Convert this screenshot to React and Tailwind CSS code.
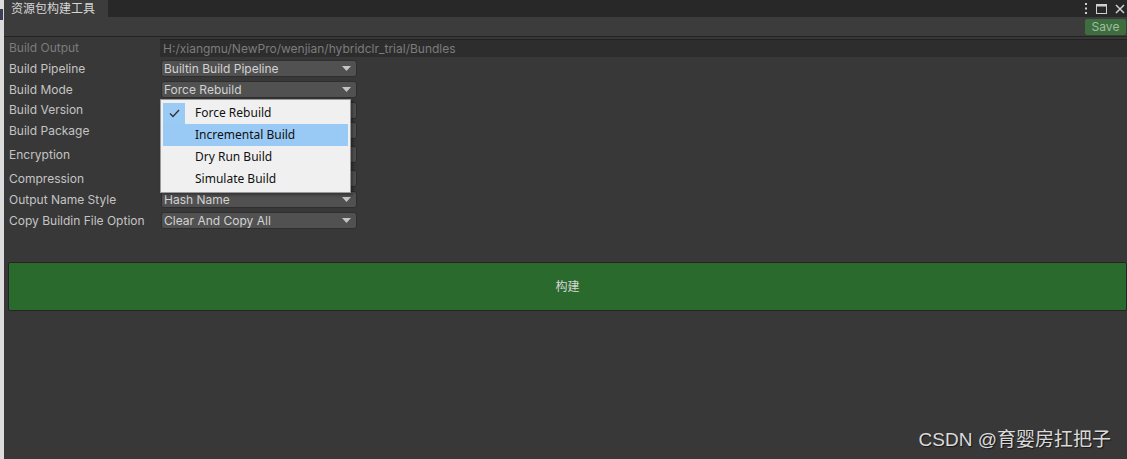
import React from "react";

const font = { fontFamily: "Inter, 'Noto Sans CJK SC', sans-serif" };

function Caret() {
  return (
    <svg width="9" height="5" viewBox="0 0 9 5" className="shrink-0">
      <path d="M0 0 L9 0 L4.5 5 Z" fill="#c4c4c4" />
    </svg>
  );
}

function Dropdown({ value }) {
  return (
    <div className="ml-[161px] w-[196px] h-[17px] bg-[#515151] border border-[#2e2e2e] rounded-[3px] flex items-center justify-between pl-[2px] pr-[5px] text-[12px] text-[#d2d2d2] leading-none">
      <span>{value}</span>
      <Caret />
    </div>
  );
}

function Row({ label, h, children, dim }) {
  return (
    <div className={`flex items-center ${h} relative`}>
      <div
        className={`absolute left-[9px] text-[12px] leading-none ${dim ? "text-[#7c7c7c]" : "text-[#c4c4c4]"}`}
      >
        {label}
      </div>
      {children}
    </div>
  );
}

export default function App() {
  return (
    <div className="w-[1127px] h-[459px] bg-[#383838] flex overflow-hidden relative" style={font}>
      <div className="w-[4px] h-full bg-[#dcdcdc] flex flex-col">
        <div className="h-[9px]" />
        <div className="h-[11px] w-[3px] bg-[#3a3f55]" />
      </div>
      <div className="flex-1 flex flex-col relative">
        {/* tab bar */}
        <div className="h-[17px] bg-[#282828] flex items-stretch">
          <div className="w-[104px] bg-[#3c3c3c] border-t border-[#3c3c3c] flex items-center pl-[7px] text-[12px] text-[#d6d6d6] leading-none">
            资源包构建工具
          </div>
          <div className="flex-1" />
          <div className="flex items-center gap-[8px] pr-[2px] text-[#d0d0d0]">
            <svg width="4" height="11" viewBox="0 0 4 11">
              <rect x="1" y="0" width="2" height="2" fill="#d0d0d0" />
              <rect x="1" y="4.5" width="2" height="2" fill="#d0d0d0" />
              <rect x="1" y="9" width="2" height="2" fill="#d0d0d0" />
            </svg>
            <svg width="11" height="10" viewBox="0 0 11 10">
              <rect x="0.5" y="0.5" width="10" height="9" fill="none" stroke="#d0d0d0" />
              <rect x="0.5" y="0.5" width="10" height="2" fill="#d0d0d0" />
            </svg>
            <svg width="10" height="10" viewBox="0 0 10 10">
              <path d="M1 1 L9 9 M9 1 L1 9" stroke="#d0d0d0" strokeWidth="1.5" />
            </svg>
          </div>
        </div>
        {/* toolbar */}
        <div className="h-[20px] bg-[#3c3c3c] border-b border-[#232323] flex items-center justify-end pr-[1px]">
          <div className="w-[41px] h-[16px] bg-[#3e6e3f] rounded-[2px] flex items-center justify-center text-[12px] text-[#9fbf9f] leading-none">
            Save
          </div>
        </div>
        {/* rows */}
        <div className="flex flex-col -ml-[4px] mt-[1px]">
          <Row label="Build Output" h="h-[20px]" dim>
            <div className="ml-[160px] flex-1 h-[18px] bg-[#2d2d2d] border-t border-[#222] flex items-center pl-[3px] text-[12px] text-[#7c7c7c] leading-none">
              H:/xiangmu/NewPro/wenjian/hybridclr_trial/Bundles
            </div>
          </Row>
          <Row label="Build Pipeline" h="h-[21px]">
            <Dropdown value="Builtin Build Pipeline" />
          </Row>
          <Row label="Build Mode" h="h-[21px]">
            <Dropdown value="Force Rebuild" />
          </Row>
          <Row label="Build Version" h="h-[20px]">
            <Dropdown value="" />
          </Row>
          <Row label="Build Package" h="h-[21px]">
            <Dropdown value="" />
          </Row>
          <Row label="Encryption" h="h-[27px]">
            <Dropdown value="" />
          </Row>
          <Row label="Compression" h="h-[21px]">
            <Dropdown value="" />
          </Row>
          <Row label="Output Name Style" h="h-[21px]">
            <Dropdown value="Hash Name" />
          </Row>
          <Row label="Copy Buildin File Option" h="h-[21px]">
            <Dropdown value="Clear And Copy All" />
          </Row>
        </div>
        <div className="h-[31px]" />
        <div className="ml-[4px] h-[49px] bg-[#2a6a2d] border border-[#242424] rounded-[2px] flex items-center justify-center text-[12px] text-[#d6d6d6] leading-none">
          构建
        </div>

        {/* popup menu */}
        <div
          className="absolute left-[156px] top-[99px] w-[191px] h-[94px] bg-[#f0f0f0] border border-[#9a9a9a] shadow-[2px_2px_3px_rgba(0,0,0,0.35)] pt-[2px] px-[2px] text-[12px] text-[#111] leading-none"
          style={{ fontFamily: "'Noto Sans', 'Noto Sans CJK SC', sans-serif" }}
        >
          <div className="h-[22px] flex items-center">
            <div className="w-[22px] h-[21px] bg-[#9acbf4] flex items-center justify-center">
              <svg width="11" height="9" viewBox="0 0 11 9">
                <path d="M1 4.5 L4 7.5 L10 1" stroke="#333" strokeWidth="1.4" fill="none" />
              </svg>
            </div>
            <span className="ml-[10px]">Force Rebuild</span>
          </div>
          <div className="h-[22px] flex items-center bg-[#99caf5]">
            <span className="ml-[32px]">Incremental Build</span>
          </div>
          <div className="h-[22px] flex items-center">
            <span className="ml-[32px]">Dry Run Build</span>
          </div>
          <div className="h-[22px] flex items-center">
            <span className="ml-[32px]">Simulate Build</span>
          </div>
        </div>

        <div className="absolute right-[16px] bottom-[10px] text-[19px] text-[#dadada] leading-none [text-shadow:1px_1px_1px_rgba(0,0,0,0.6)]" style={{ fontFamily: "'Liberation Sans', 'Noto Sans CJK SC', sans-serif" }}>
          CSDN @育婴房扛把子
        </div>
      </div>
    </div>
  );
}
